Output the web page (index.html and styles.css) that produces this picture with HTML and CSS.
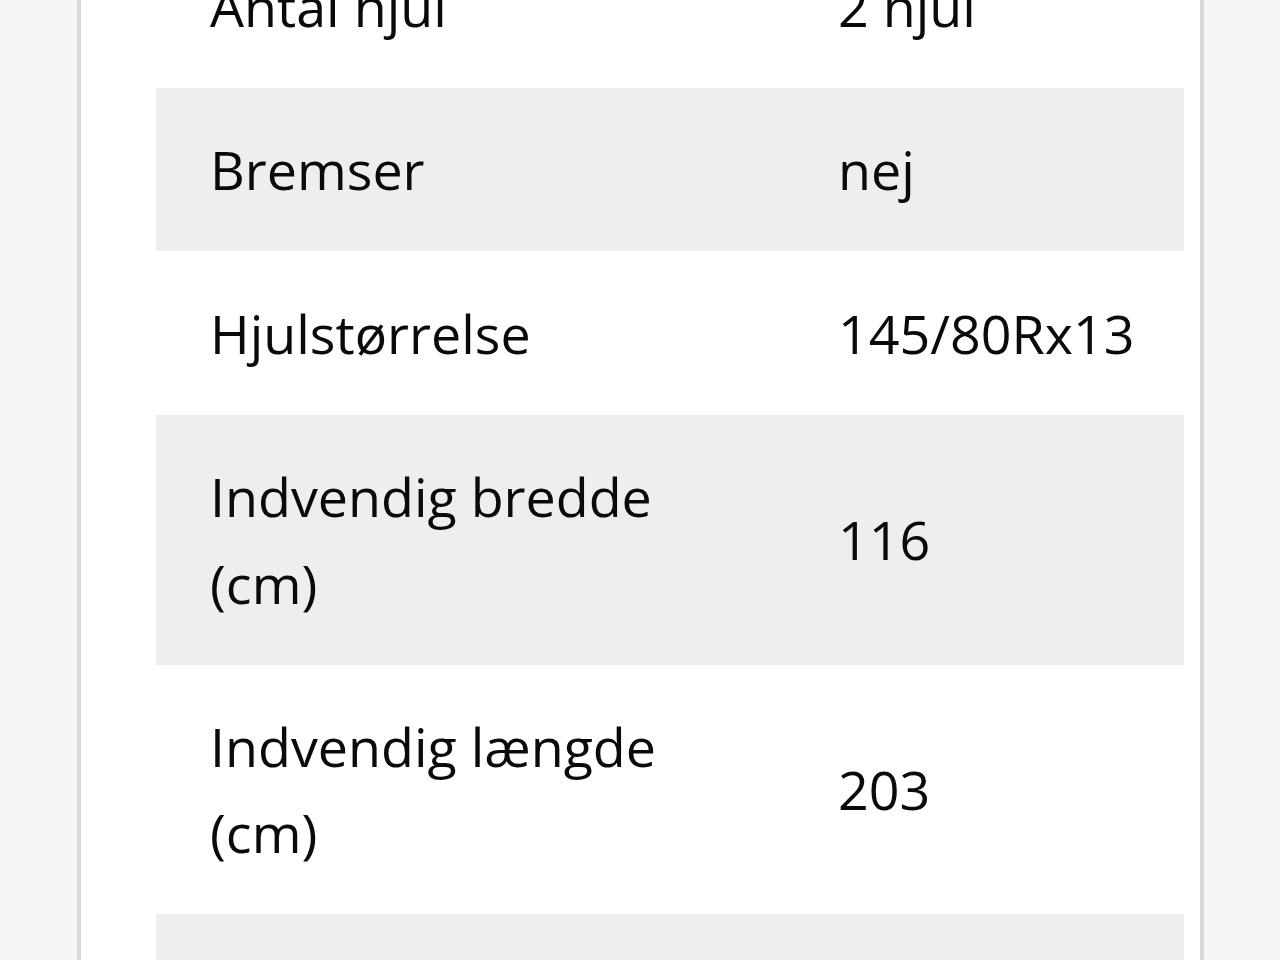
FILE: index.html
```html
<!DOCTYPE html>
<html lang="da">
<head>
<meta charset="utf-8">
<title>Specifikationer</title>
<link rel="stylesheet" href="styles.css">
</head>
<body>
<div class="page">
  <div class="card">
    <table class="specs">
      <colgroup><col class="c-label"><col class="c-value"></colgroup>
      <tbody>
        <tr><td>Antal hjul</td><td>2 hjul</td></tr>
        <tr class="alt"><td>Bremser</td><td>nej</td></tr>
        <tr><td>Hjulstørrelse</td><td>145/80Rx13</td></tr>
        <tr class="alt"><td>Indvendig bredde (cm)</td><td>116</td></tr>
        <tr><td>Indvendig længde (cm)</td><td>203</td></tr>
        <tr class="alt"><td>Indvendig højde (cm)</td><td>35</td></tr>
      </tbody>
    </table>
  </div>
</div>
</body>
</html>
```

FILE: styles.css
```css
html, body {
  margin: 0;
  padding: 0;
  background: #f5f5f5;
  height: 100%;
  overflow: hidden;
}
.page {
  padding-left: 77px;
  height: 100%;
}
.card {
  display: flow-root;
  box-sizing: border-box;
  width: 1127px;
  min-height: 100%;
  background: #ffffff;
  border-left: 4px solid #d9d9d9;
  border-right: 4px solid #d9d9d9;
  padding: 0 15px 0 75px;
}
.specs {
  width: 1028px;
  table-layout: fixed;
  border-collapse: collapse;
  margin-top: -75.5px;
  font-family: "Open Sans", "Noto Sans", sans-serif;
  font-size: 53.8px;
  line-height: 86.4px;
  color: #0a0a0a;
}
.c-label { width: 628px; }
.c-value { width: 400px; }
.specs td {
  padding: 38.5px 20px 38.5px 54px;
  vertical-align: middle;
}
.specs tr.alt { background: #eeeeee; }
```
